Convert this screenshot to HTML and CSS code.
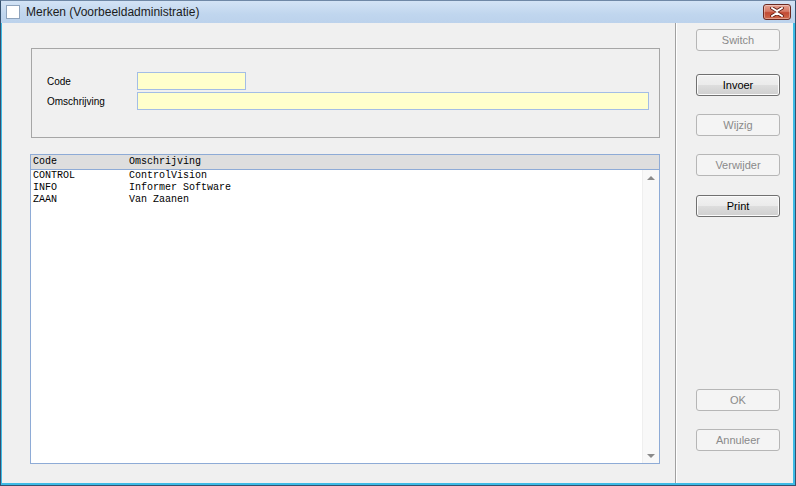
FILE: index.html
```html
<!DOCTYPE html>
<html>
<head>
<meta charset="utf-8">
<link rel="stylesheet" href="styles.css">
</head>
<body>
<div class="window">
  <div class="titlebar">
    <span class="appicon"></span>
    <span class="title">Merken (Voorbeeldadministratie)</span>
    <span class="closebtn">
      <svg width="16" height="10" viewBox="0 0 16 10">
        <path d="M3 1 L8 4 L13 1 M3 9 L8 6 L13 9" fill="none" stroke="#5a1a12" stroke-width="3.6" stroke-linecap="round"/>
        <path d="M3 1 L8 4 L13 1 M3 9 L8 6 L13 9" fill="none" stroke="#ffffff" stroke-width="2" stroke-linecap="round"/>
      </svg>
    </span>
  </div>
  <div class="frame">
    <div class="client">
      <div class="main">
        <div class="groupbox">
          <div class="field">
            <span class="label">Code</span>
            <span class="input input-code"></span>
          </div>
          <div class="field">
            <span class="label">Omschrijving</span>
            <span class="input input-oms"></span>
          </div>
        </div>
        <div class="list">
          <div class="list-head">
            <span class="col-code">Code</span>
            <span class="col-oms">Omschrijving</span>
          </div>
          <div class="list-body">
            <div class="rows">
              <div class="row"><span class="col-code">CONTROL</span><span class="col-oms">ControlVision</span></div>
              <div class="row"><span class="col-code">INFO</span><span class="col-oms">Informer Software</span></div>
              <div class="row"><span class="col-code">ZAAN</span><span class="col-oms">Van Zaanen</span></div>
            </div>
            <div class="scrollbar">
              <span class="arrow arrow-up"></span>
              <span class="arrow arrow-down"></span>
            </div>
          </div>
        </div>
      </div>
      <div class="separator"></div>
      <div class="side">
        <button class="btn disabled">Switch</button>
        <button class="btn b-invoer">Invoer</button>
        <button class="btn disabled b-next">Wijzig</button>
        <button class="btn disabled b-next">Verwijder</button>
        <button class="btn b-print">Print</button>
        <div class="spacer"></div>
        <button class="btn disabled">OK</button>
        <button class="btn disabled b-next">Annuleer</button>
      </div>
    </div>
  </div>
</div>
</body>
</html>
```

FILE: styles.css
```css
html, body {
  margin: 0;
  padding: 0;
  background: #f0f0f0;
}
.window {
  width: 796px;
  height: 486px;
  box-sizing: border-box;
  border: 1px solid #34506e;
  border-top-color: #6f88a6;
  display: flex;
  flex-direction: column;
  font-family: "Liberation Sans", Arial, sans-serif;
}
.titlebar {
  height: 22px;
  flex: none;
  display: flex;
  align-items: center;
  background: linear-gradient(#d3e3f5, #c0d6ee 60%, #bcd2ec);
  padding-left: 5px;
  padding-right: 4px;
}
.appicon {
  width: 12px;
  height: 12px;
  border: 1px solid #8fa4bd;
  background: #ffffff;
  flex: none;
  margin-top: -1px;
}
.title {
  margin-left: 6px;
  font-size: 12px;
  color: #1b1b1b;
  flex: 1;
  margin-top: -1px;
}
.closebtn {
  width: 26px;
  height: 14px;
  border: 1px solid #6b2a22;
  border-radius: 3px;
  background: linear-gradient(#e5a08f, #d67a66 45%, #c24a33 55%, #cf6a4d);
  display: flex;
  align-items: center;
  justify-content: center;
  margin-top: -1px;
  box-shadow: inset 0 0 0 1px rgba(255,255,255,0.35);
}
.frame {
  flex: 1;
  display: flex;
  border-left: 1px solid #3cbbe6;
  border-right: 2px solid #3cbbe6;
  border-bottom: 2px solid #3cbbe6;
  background: #3cbbe6;
}
.client {
  flex: 1;
  display: flex;
  background: #f0f0f0;
}
.main {
  width: 673px;
  flex: none;
  padding: 25px 0 0 28px;
  box-sizing: border-box;
}
.groupbox {
  margin-left: 1px;
  width: 629px;
  height: 90px;
  box-sizing: border-box;
  border: 1px solid #a6a6a6;
  padding: 23px 9px 0 15px;
  display: flex;
  flex-direction: column;
  gap: 2px;
}
.field {
  display: flex;
  align-items: center;
}
.label {
  width: 90px;
  flex: none;
  font-size: 10px;
  color: #000;
}
.input {
  display: block;
  height: 18px;
  box-sizing: border-box;
  border: 1px solid #a3bde6;
  background: #ffffcc;
}
.input-code {
  width: 109px;
}
.input-oms {
  width: 512px;
}
.list {
  margin-top: 16px;
  width: 630px;
  height: 310px;
  box-sizing: border-box;
  border: 1px solid #8eabd6;
  background: #ffffff;
  display: flex;
  flex-direction: column;
  font-family: "Liberation Mono", "Courier New", monospace;
  font-size: 10px;
  color: #000;
}
.list-head {
  height: 14px;
  line-height: 14px;
  background: #dedede;
  border-bottom: 1px solid #8eabd6;
  display: flex;
  flex: none;
}
.col-code {
  width: 96px;
  padding-left: 2px;
  flex: none;
  white-space: pre;
}
.col-oms {
  white-space: pre;
}
.list-body {
  flex: 1;
  display: flex;
}
.rows {
  flex: 1;
}
.row {
  height: 12px;
  line-height: 12px;
  display: flex;
}
.scrollbar {
  width: 16px;
  flex: none;
  background: #f8f8f8;
  border-left: 1px solid #efefef;
  display: flex;
  flex-direction: column;
  justify-content: space-between;
  align-items: center;
  padding: 6px 0 5px;
}
.arrow {
  width: 0;
  height: 0;
  border-left: 4px solid transparent;
  border-right: 4px solid transparent;
}
.arrow-up {
  border-bottom: 4px solid #8a8a8a;
}
.arrow-down {
  border-top: 4px solid #8a8a8a;
}
.separator {
  width: 1px;
  flex: none;
  background: #a0a0a0;
  border-right: 1px solid #ffffff;
}
.side {
  flex: 1;
  display: flex;
  flex-direction: column;
  padding: 6px 0 32px 19px;
}
.btn {
  width: 84px;
  height: 22px;
  box-sizing: border-box;
  border: 1px solid #707070;
  border-radius: 3px;
  background: linear-gradient(#f2f2f2, #ebebeb 48%, #dddddd 52%, #cfcfcf);
  box-shadow: inset 0 0 0 1px #fbfbfb;
  font-family: "Liberation Sans", Arial, sans-serif;
  font-size: 11px;
  color: #000;
  padding: 0;
  margin: 0;
  flex: none;
}
.btn.disabled {
  border-color: #b6b6b6;
  background: #f4f4f4;
  box-shadow: none;
  color: #8a8a8a;
}
.b-invoer {
  margin-top: 23px;
}
.b-next {
  margin-top: 18px;
}
.b-print {
  margin-top: 19px;
}
.spacer {
  flex: 1;
}
```
